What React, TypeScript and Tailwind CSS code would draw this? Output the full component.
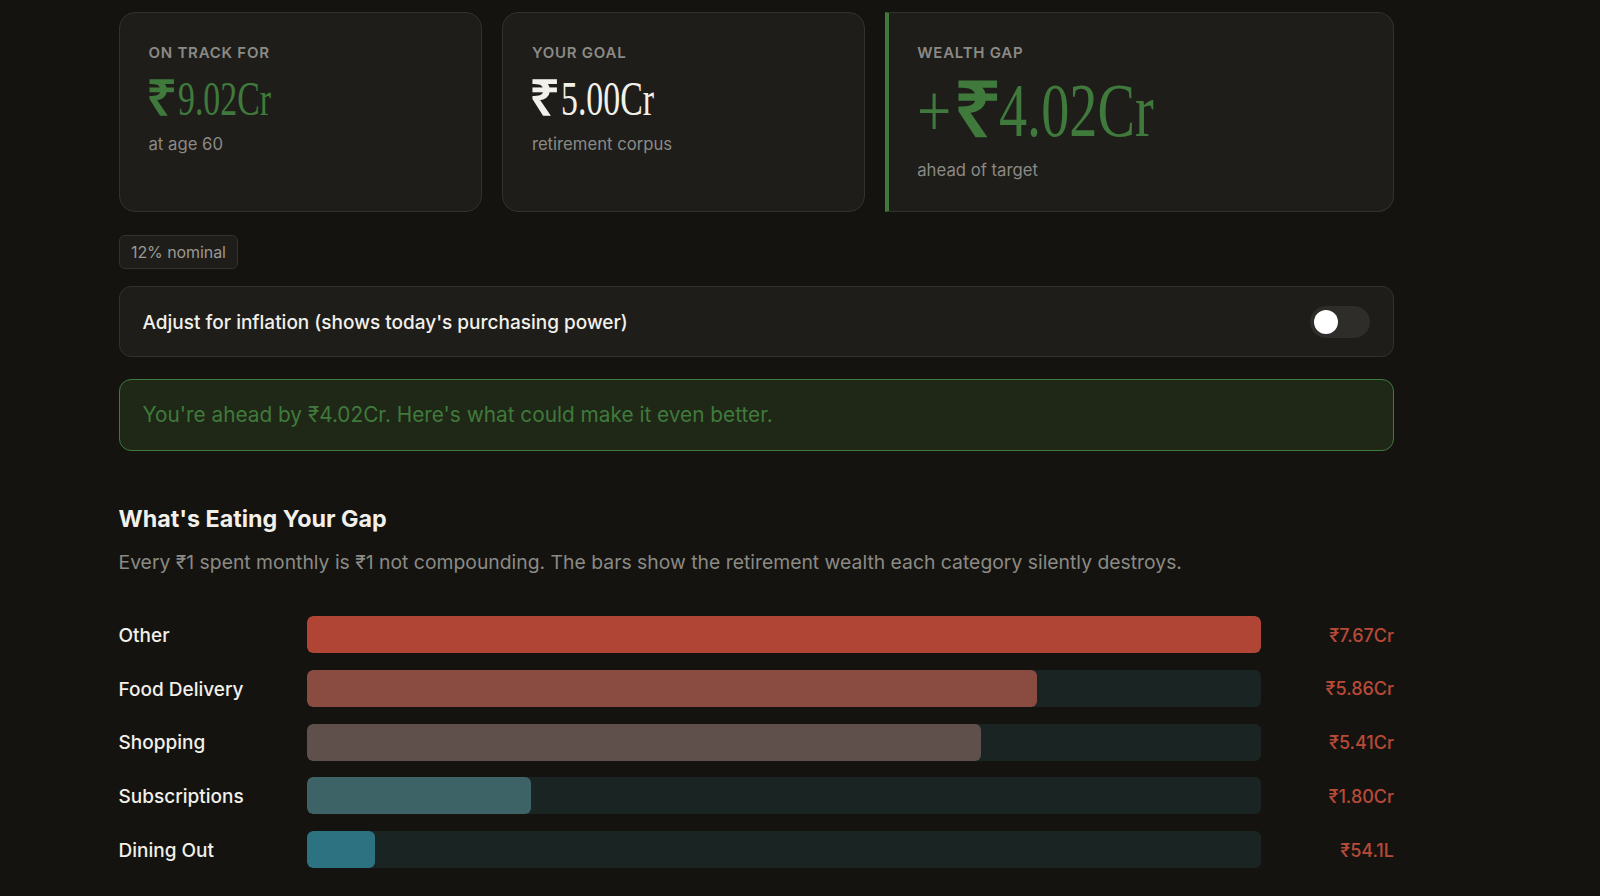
const sans = "font-['Inter','Noto_Sans',sans-serif]";

const rows = [
  { name: "Other", value: "₹7.67Cr", width: "w-full", fill: "bg-[#b04435]" },
  { name: "Food Delivery", value: "₹5.86Cr", width: "w-[76.5%]", fill: "bg-[#8a4b41]" },
  { name: "Shopping", value: "₹5.41Cr", width: "w-[70.6%]", fill: "bg-[#60504b]" },
  { name: "Subscriptions", value: "₹1.80Cr", width: "w-[23.5%]", fill: "bg-[#3e6366]" },
  { name: "Dining Out", value: "₹54.1L", width: "w-[7.1%]", fill: "bg-[#2c7280]" },
];

function StatCard({ label, value, note, color, large }: { label: string; value: string; note: string; color: string; large?: boolean }) {
  return (
    <div className={`h-[200px] rounded-2xl border border-[#32312d] bg-[#1e1d1a] pt-[30px] ${large ? "rounded-l-none border-l-4 border-l-[#3f7a3c] pl-[28px]" : "pl-[29px]"}`}>
      <div className="text-[15px] leading-[20px] font-semibold tracking-[0.05em] text-[#8b8a85]">{label}</div>
      <div className={`flex font-['Liberation_Serif',serif] whitespace-nowrap ${color} ${large ? "mt-[8px] text-[76px] leading-[78px]" : "mt-[10px] text-[49px] leading-[52px]"}`}>
        {large && <span className="w-[36px] origin-left scale-x-[0.8]">+</span>}
        <span className={`origin-left font-bold ${large ? "w-[46px] scale-x-[1.14]" : "-ml-[3px] w-[32px] scale-x-[1.12]"}`}>₹</span>
        <span className={`origin-left ${large ? "scale-x-[0.74]" : "scale-x-[0.69]"}`}>{value}</span>
      </div>
      <div className={`text-[16.7px] leading-[24px] text-[#8b8a85] ${large ? "mt-[9px]" : "mt-[7px]"}`}>{note}</div>
    </div>
  );
}

export default function App() {
  return (
    <div className={`h-[896px] overflow-hidden bg-[#14130f] pt-3 pl-[118.5px] ${sans}`}>
      <div className="w-[1275.5px]">
        <div className="grid grid-cols-[1fr_1fr_1.4fr] gap-5">
          <StatCard label="ON TRACK FOR" value="9.02Cr" note="at age 60" color="text-[#3f7a3c]" />
          <StatCard label="YOUR GOAL" value="5.00Cr" note="retirement corpus" color="text-[#f2f0ea]" />
          <StatCard label="WEALTH GAP" value="4.02Cr" note="ahead of target" color="text-[#3f7a3c]" large />
        </div>

        <div className="mt-[23px] inline-flex h-[34px] items-center rounded-md border border-[#32312d] bg-[#1e1d1a] px-[11.5px] text-[16px] tracking-[-0.005em] text-[#9a9994]">
          12% nominal
        </div>

        <div className="mt-[17px] flex h-[71px] items-center justify-between rounded-xl border border-[#32312d] bg-[#1e1d1a] pr-[23px] pl-[23px]">
          <span className="pt-[3px] text-[19px] font-medium text-[#f2f0ea]">Adjust for inflation (shows today's purchasing power)</span>
          <div className="flex h-[32px] w-[60px] items-center rounded-full bg-[#2e2d2a] pl-[4px]">
            <div className="size-6 rounded-full bg-white"></div>
          </div>
        </div>

        <div className="mt-[22px] flex h-[72px] items-center rounded-xl border-[1.5px] border-[#3f7a3c] bg-[#1f2716] pl-[23px] text-[20.8px] text-[#3f7a3c]">
          You're ahead by ₹4.02Cr. Here's what could make it even better.
        </div>

        <h2 className="mt-[50px] text-[23.3px] leading-[36px] font-bold text-[#f2f0ea]">What's Eating Your Gap</h2>
        <p className="mt-[11px] text-[19.35px] leading-[28px] text-[#8b8a85]">
          Every ₹1 spent monthly is ₹1 not compounding. The bars show the retirement wealth each category silently destroys.
        </p>

        <div className="mt-[40px] flex flex-col gap-[16.75px]">
          {rows.map((row) => (
            <div key={row.name} className="flex h-[37px] items-center">
              <div className="w-[188.5px] pt-[3px] text-[19px] font-medium text-[#f2f0ea]">{row.name}</div>
              <div className="h-full w-[954px] overflow-hidden rounded-md bg-[#1a2422]">
                <div className={`h-full rounded-md ${row.width} ${row.fill}`}></div>
              </div>
              <div className="flex-1 pt-[1px] text-right text-[18px] font-medium text-[#b84a38]">{row.value}</div>
            </div>
          ))}
        </div>
      </div>
    </div>
  );
}
